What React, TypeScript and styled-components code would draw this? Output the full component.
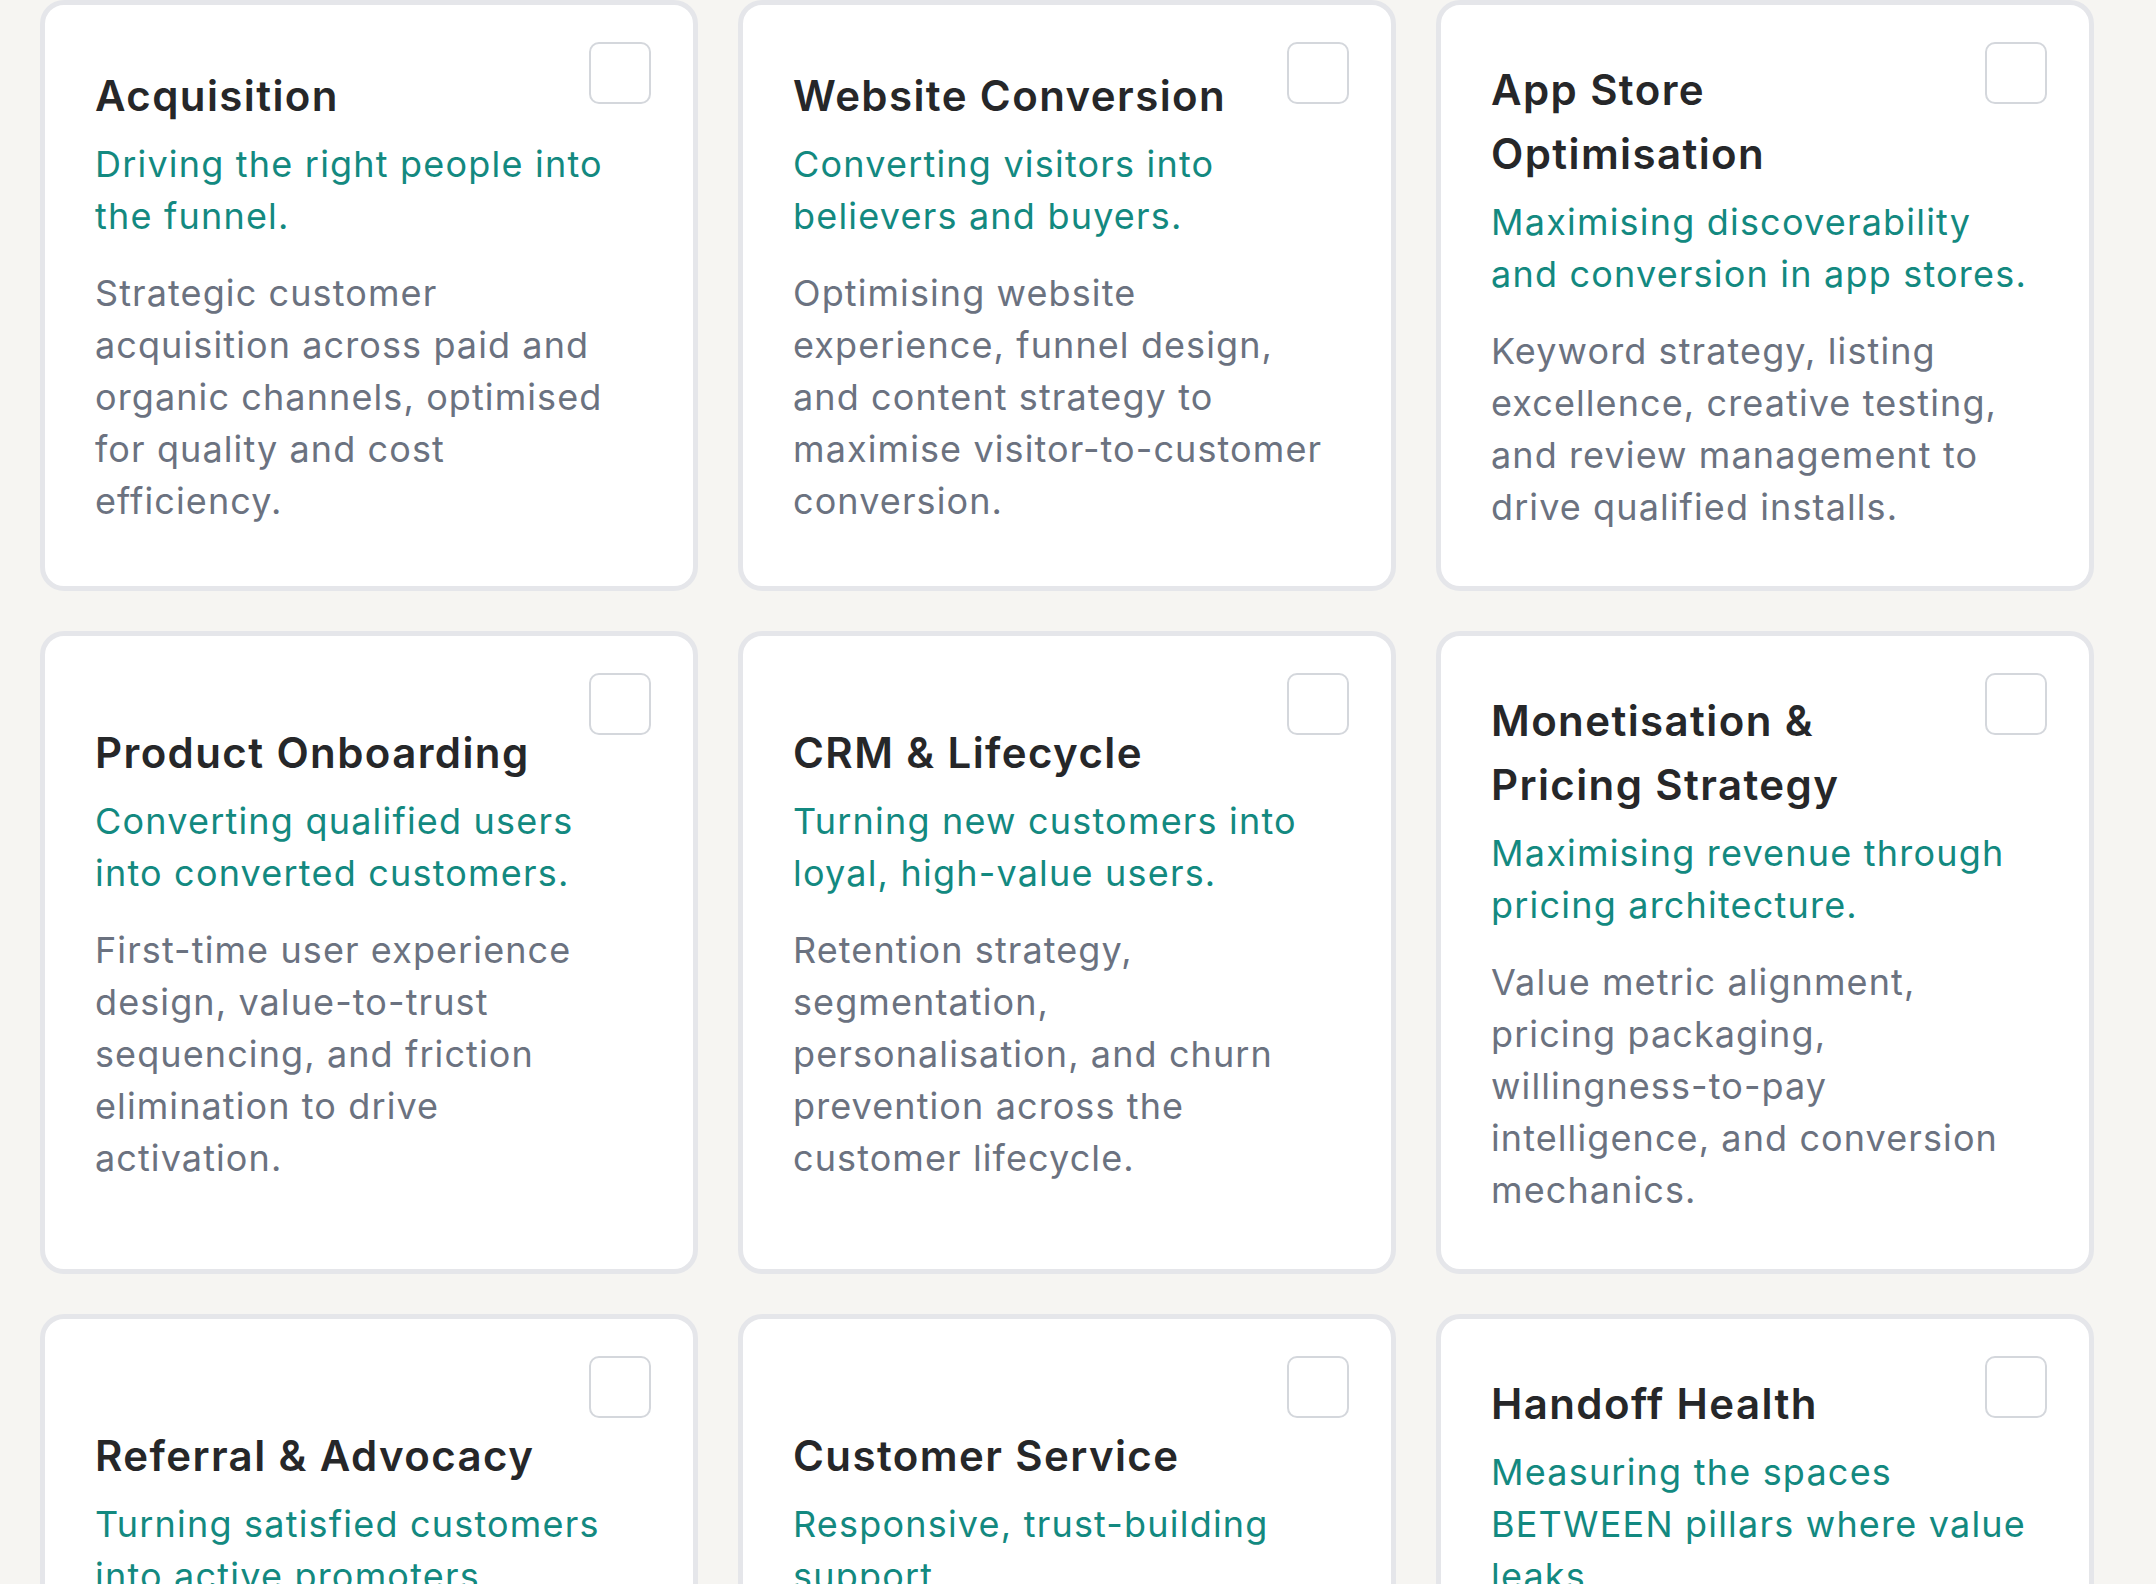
import React from 'react'
import styled, { createGlobalStyle } from 'styled-components'

const GlobalStyle = createGlobalStyle`
    html, body {
        margin: 0;
        padding: 0;
        background: #f6f5f2;
        overflow: hidden;
    }
    body {
        font-family: Inter, "Noto Sans", "Liberation Sans", sans-serif;
        -webkit-font-smoothing: antialiased;
    }
`

const Page = styled.div`
    padding: 0 0 0 40px;
`

const Grid = styled.div`
    display: grid;
    grid-template-columns: repeat(3, 658px);
    column-gap: 40px;
    row-gap: 40px;
`

const Card = styled.div`
    position: relative;
    box-sizing: border-box;
    display: flex;
    flex-direction: column;
    justify-content: center;
    background: #ffffff;
    border: 5px solid #e5e6ea;
    border-radius: 24px;
    padding: 53px 58px 53px 50px;
`

const Check = styled.span`
    position: absolute;
    top: 37px;
    right: 42px;
    width: 62px;
    height: 62px;
    box-sizing: border-box;
    border: 2.5px solid #d4d7dc;
    border-radius: 10px;
    background: #fff;
`

const Title = styled.h3`
    margin: 0 0 10px;
    padding-right: 80px;
    font-size: 42px;
    line-height: 64px;
    font-weight: 600;
    color: #262729;
    letter-spacing: 1.4px;
`

const Tagline = styled.p`
    margin: 0 0 25px;
    font-size: 36px;
    line-height: 52px;
    font-weight: 400;
    color: #138980;
    letter-spacing: 1.2px;
`

const Body = styled.p`
    margin: 0;
    font-size: 36px;
    line-height: 52px;
    font-weight: 400;
    color: #6b7280;
    letter-spacing: 1.1px;
`

type Pillar = { title: string; tagline: string; body: string }

const pillars: Pillar[] = [
    {
        title: 'Acquisition',
        tagline: 'Driving the right people into the funnel.',
        body: 'Strategic customer acquisition across paid and organic channels, optimised for quality and cost efficiency.',
    },
    {
        title: 'Website Conversion',
        tagline: 'Converting visitors into believers and buyers.',
        body: 'Optimising website experience, funnel design, and content strategy to maximise visitor-to-customer conversion.',
    },
    {
        title: 'App Store Optimisation',
        tagline: 'Maximising discoverability and conversion in app stores.',
        body: 'Keyword strategy, listing excellence, creative testing, and review management to drive qualified installs.',
    },
    {
        title: 'Product Onboarding',
        tagline: 'Converting qualified users into converted customers.',
        body: 'First-time user experience design, value-to-trust sequencing, and friction elimination to drive activation.',
    },
    {
        title: 'CRM & Lifecycle',
        tagline: 'Turning new customers into loyal, high-value users.',
        body: 'Retention strategy, segmentation, personalisation, and churn prevention across the customer lifecycle.',
    },
    {
        title: 'Monetisation & Pricing Strategy',
        tagline: 'Maximising revenue through pricing architecture.',
        body: 'Value metric alignment, pricing packaging, willingness-to-pay intelligence, and conversion mechanics.',
    },
    {
        title: 'Referral & Advocacy',
        tagline: 'Turning satisfied customers into active promoters.',
        body: 'Referral programme design, incentive structures, and advocacy loops that compound organic growth.',
    },
    {
        title: 'Customer Service',
        tagline: 'Responsive, trust-building support.',
        body: 'Support operations, response standards, and feedback loops that protect retention and reputation.',
    },
    {
        title: 'Handoff Health',
        tagline: 'Measuring the spaces BETWEEN pillars where value leaks.',
        body: 'Diagnosing friction at the transitions between acquisition, conversion, onboarding, and retention so nothing slips through.',
    },
]

const PillarCard = ({ pillar }: { pillar: Pillar }) => (
    <Card>
        <Check />
        <Title>{pillar.title}</Title>
        <Tagline>{pillar.tagline}</Tagline>
        <Body>{pillar.body}</Body>
    </Card>
)

export default function App() {
    return (
        <>
            <GlobalStyle />
            <Page>
                <Grid>
                    {pillars.map((p) => (
                        <PillarCard key={p.title} pillar={p} />
                    ))}
                </Grid>
            </Page>
        </>
    )
}
